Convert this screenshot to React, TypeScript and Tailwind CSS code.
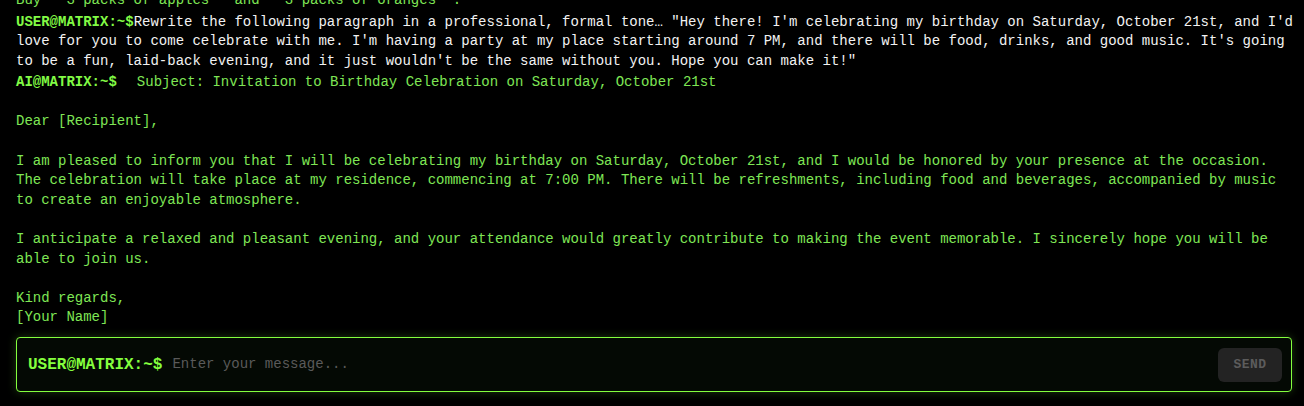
import React from "react";

const userPrompt = "USER@MATRIX:~$";
const aiPrompt = "AI@MATRIX:~$";

const messages: { role: "user" | "ai"; text: string }[] = [
  { role: "user", text: "Make a shopping list for a fruit salad." },
  {
    role: "ai",
    text:
      "Here is a simple shopping list:\n\n- Apples\n- Oranges\n- Bananas\n\nBuy **3 packs of apples** and **3 packs of oranges**.",
  },
  {
    role: "user",
    text:
      "Rewrite the following paragraph in a professional, formal tone… \"Hey there! I'm celebrating my birthday on Saturday, October 21st, and I'd love for you to come celebrate with me. I'm having a party at my place starting around 7 PM, and there will be food, drinks, and good music. It's going to be a fun, laid-back evening, and it just wouldn't be the same without you. Hope you can make it!\"",
  },
  {
    role: "ai",
    text:
      "Subject: Invitation to Birthday Celebration on Saturday, October 21st\n\nDear [Recipient],\n\nI am pleased to inform you that I will be celebrating my birthday on Saturday, October 21st, and I would be honored by your presence at the occasion. The celebration will take place at my residence, commencing at 7:00 PM. There will be refreshments, including food and beverages, accompanied by music to create an enjoyable atmosphere.\n\nI anticipate a relaxed and pleasant evening, and your attendance would greatly contribute to making the event memorable. I sincerely hope you will be able to join us.\n\nKind regards,\n[Your Name]",
  },
];

export default function App() {
  return (
    <div className="h-[406px] w-full bg-black flex flex-col font-['Liberation_Mono',monospace] overflow-hidden">
      <div className="flex-1 min-h-0 overflow-hidden flex flex-col justify-end gap-[2px] pl-4 pr-2 pb-[9px]">
        {messages.map((m, i) => (
          <div
            key={i}
            className="whitespace-pre-wrap text-[14px] leading-[19.6px] shrink-0"
          >
            {m.role === "user" ? (
              <>
                <span className="font-bold text-[#82fb45]">{userPrompt}</span>
                <span className="text-[#f2f2f2]">{m.text}</span>
              </>
            ) : (
              <>
                <span className="font-bold text-[#82fb45] mr-[20px]">{aiPrompt}</span>
                <span className="text-[#7fe655]">{m.text}</span>
              </>
            )}
          </div>
        ))}
      </div>
      <div className="pl-4 pr-3 pb-[14px]">
        <div className="h-[55px] flex items-center border border-[#84ff3e] rounded-[4px] bg-[#040904] shadow-[0_0_10px_rgba(128,255,64,0.22)] pl-[11px] pr-[9px]">
          <span className="font-bold text-[16px] text-[#84ff3e] whitespace-nowrap">{userPrompt}</span>
          <input
            className="flex-1 ml-[10px] bg-transparent outline-none text-[14px] text-[#cfcfcf] placeholder:text-[#5a5a5a] font-['Liberation_Mono',monospace]"
            placeholder="Enter your message..."
          />
          <button className="h-[34px] w-[64px] rounded-[6px] bg-[#232323] text-[#5c5c5c] font-bold text-[13px] tracking-[0.5px] font-['Liberation_Mono',monospace]">
            SEND
          </button>
        </div>
      </div>
    </div>
  );
}
